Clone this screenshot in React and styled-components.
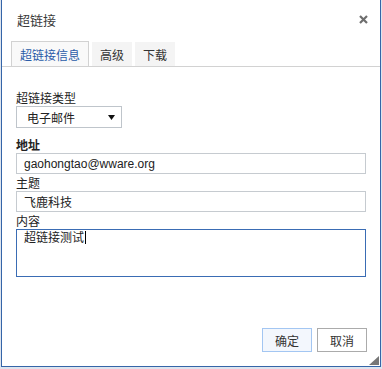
import React from 'react';
import styled, { createGlobalStyle } from 'styled-components';

const GlobalStyle = createGlobalStyle`
  html, body {
    margin: 0;
    padding: 0;
    background: #dde4ee;
  }
  body {
    font-family: "Liberation Sans", "Noto Sans CJK SC", sans-serif;
    font-size: 12px;
    color: #222;
  }
`;

// Dialog frame
const Dialog = styled.div`
  position: relative;
  box-sizing: border-box;
  width: 380px;
  height: 367px;
  margin-left: 1px;
  background: #fff;
  border: 1px solid #3565a8;
  border-top: none;
  display: flex;
  flex-direction: column;
`;

const Header = styled.div`
  height: 38px;
  display: flex;
  align-items: center;
  justify-content: space-between;
  padding: 0 12px 0 15px;
`;

const Title = styled.div`
  font-size: 13px;
  color: #3a3a3a;
`;

const Close = styled.button`
  border: none;
  background: none;
  padding: 0;
  width: 10px;
  height: 10px;
  display: flex;
  align-items: center;
  justify-content: center;
  cursor: pointer;
`;

// Tabs
const TabBar = styled.div`
  margin-top: 3px;
  height: 25px;
  display: flex;
  align-items: flex-end;
  gap: 3px;
  padding-left: 9px;
  border-bottom: 1px solid #d2d2d2;
`;

const Tab = styled.div`
  box-sizing: border-box;
  height: ${({ active }) => (active ? '25px' : '24px')};
  padding: 0 8px;
  display: flex;
  align-items: center;
  font-size: 12px;
  color: ${({ active }) => (active ? '#2b5ca8' : '#333')};
  background: ${({ active }) => (active ? '#f9f9f9' : '#f4f4f4')};
  border: ${({ active }) => (active ? '1px solid #d2d2d2' : 'none')};
  border-bottom: none;
  cursor: pointer;
`;

// Form body
const Body = styled.div`
  padding: 22px 14px 0 14px;
  display: flex;
  flex-direction: column;
`;

const Label = styled.label`
  display: block;
  line-height: 14px;
  margin-top: ${({ gap }) => gap || 3}px;
  font-weight: ${({ bold }) => (bold ? 'bold' : 'normal')};
  color: #222;
`;

const Select = styled.div`
  box-sizing: border-box;
  width: 106px;
  height: 22px;
  border: 1px solid #bfc5cb;
  display: flex;
  align-items: center;
  justify-content: space-between;
  padding: 0 6px 0 10px;
  color: #222;
`;

const Input = styled.input`
  box-sizing: border-box;
  width: 100%;
  height: 21px;
  margin: 0;
  border: 1px solid #c6cbd0;
  padding: 0 7px;
  font-family: inherit;
  font-size: 12px;
  color: #222;
  outline: none;
`;

const TextArea = styled.div`
  box-sizing: border-box;
  height: 48px;
  border: 1px solid #3a6cb4;
  padding: 0 7px;
  line-height: 16px;
  color: #222;
`;

const Caret = styled.span`
  display: inline-block;
  width: 1px;
  height: 13px;
  background: #000;
  vertical-align: -2px;
  margin-left: 1px;
`;

// Footer
const Footer = styled.div`
  margin-top: auto;
  display: flex;
  justify-content: flex-end;
  gap: 5px;
  padding: 0 13px 14px 0;
`;

const Button = styled.button`
  box-sizing: border-box;
  width: 50px;
  height: 24px;
  padding: 0;
  font-family: inherit;
  font-size: 12px;
  color: #333;
  background: ${({ primary }) => (primary ? '#f3f7fd' : '#fff')};
  border: 1px solid ${({ primary }) => (primary ? '#a3c6f2' : '#ababab')};
  cursor: pointer;
`;

const Grip = styled.svg`
  position: absolute;
  right: 1px;
  bottom: 1px;
`;

const App = () => {
  return (
    <>
      <GlobalStyle />
      <Dialog>
        <Header>
          <Title>超链接</Title>
          <Close aria-label="关闭">
            <svg width="9" height="9" viewBox="0 0 9 9">
              <path d="M1 1 L8 8 M8 1 L1 8" stroke="#6e6e6e" strokeWidth="2.2" />
            </svg>
          </Close>
        </Header>

        <TabBar>
          <Tab active>超链接信息</Tab>
          <Tab>高级</Tab>
          <Tab>下载</Tab>
        </TabBar>

        <Body>
          <Label gap={0}>超链接类型</Label>
          <Select>
            <span>电子邮件</span>
            <svg width="7" height="5" viewBox="0 0 7 5">
              <polygon points="0,0 7,0 3.5,5" fill="#111" />
            </svg>
          </Select>

          <Label bold gap={11}>地址</Label>
          <Input readOnly value="gaohongtao@wware.org" />

          <Label>主题</Label>
          <Input readOnly value="飞鹿科技" />

          <Label>内容</Label>
          <TextArea>
            超链接测试<Caret />
          </TextArea>
        </Body>

        <Footer>
          <Button primary>确定</Button>
          <Button>取消</Button>
        </Footer>

        <Grip width="10" height="9" viewBox="0 0 10 9">
          <polygon points="10,0 10,9 0,9" fill="#777" />
        </Grip>
      </Dialog>
    </>
  );
};

export default App;
